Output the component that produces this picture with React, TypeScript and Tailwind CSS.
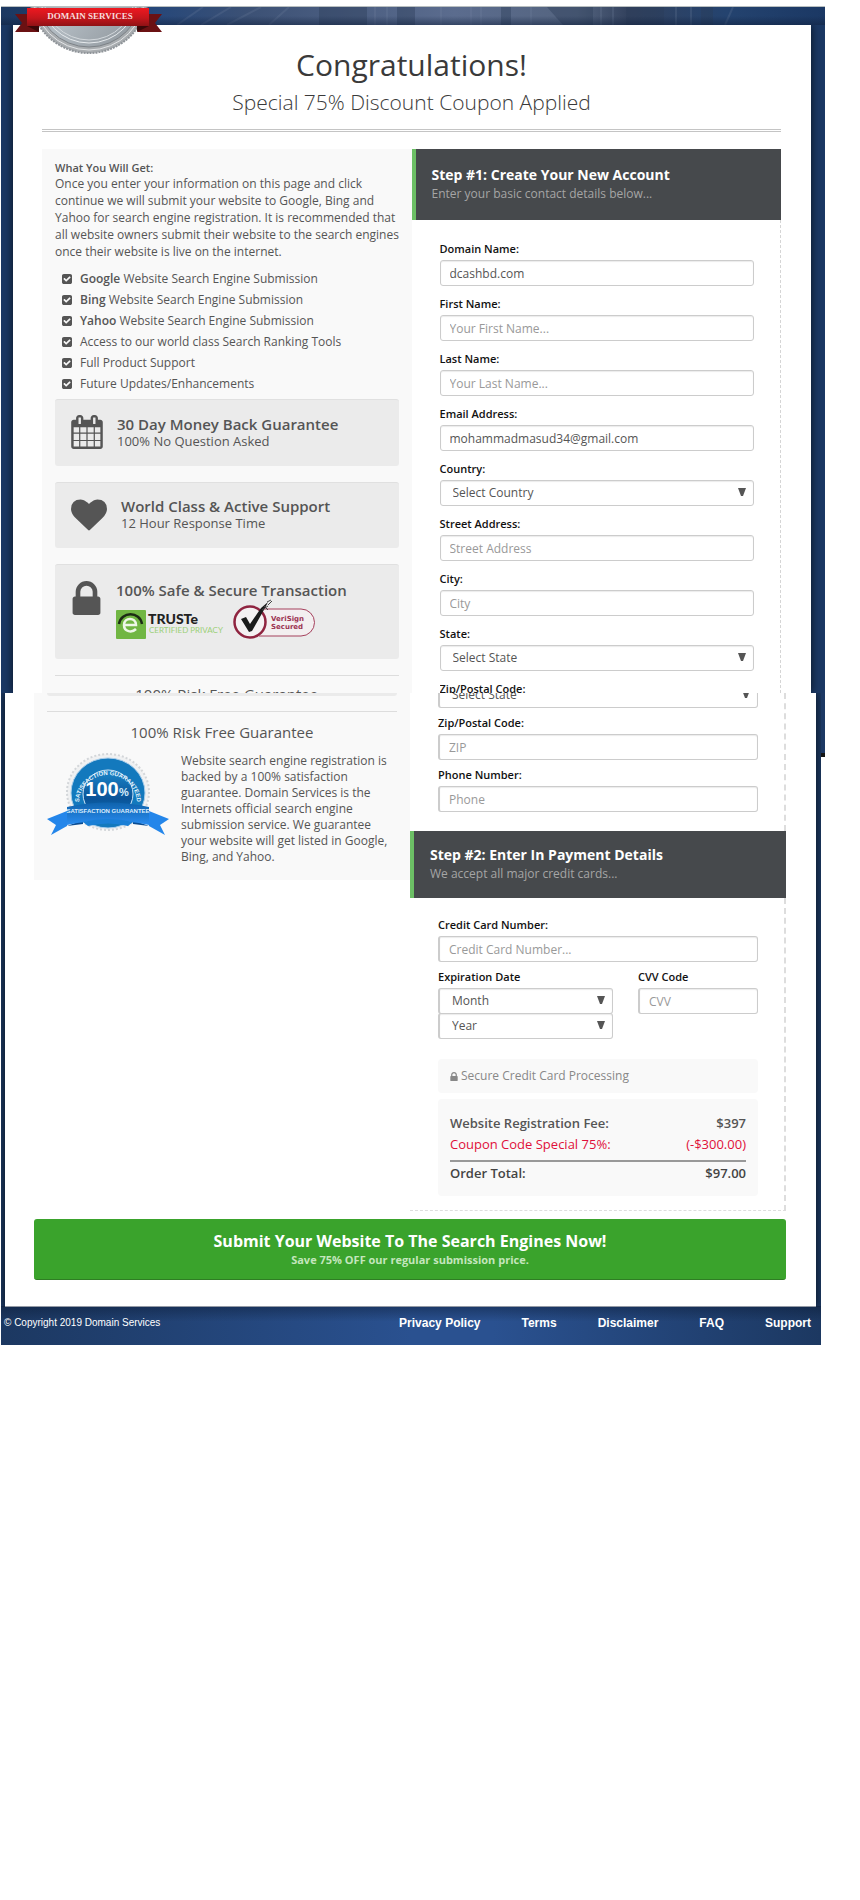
import type { ReactNode } from "react";

const CALENDAR =
  "M128 1664h288v-288h-288v288zm352 0h320v-288h-320v288zm-352-352h288v-320h-288v320zm352 0h320v-320h-320v320zm-352-384h288v-288h-288v288zm736 736h320v-288h-320v288zm-384-736h320v-288h-320v288zm768 736h288v-288h-288v288zm-384-352h320v-320h-320v320zm-352-864v-288q0-13-9.5-22.5t-22.5-9.5h-64q-13 0-22.5 9.5t-9.5 22.5v288q0 13 9.5 22.5t22.5 9.5h64q13 0 22.5-9.5t9.5-22.5zm736 864h288v-320h-288v320zm-384-384h320v-288h-320v288zm384 0h288v-288h-288v288zm32-480v-288q0-13-9.5-22.5t-22.5-9.5h-64q-13 0-22.5 9.5t-9.5 22.5v288q0 13 9.5 22.5t22.5 9.5h64q13 0 22.5-9.5t9.5-22.5zm384-64v1280q0 52-38 90t-90 38h-1408q-52 0-90-38t-38-90v-1280q0-52 38-90t90-38h128v-96q0-66 47-113t113-47h64q66 0 113 47t47 113v96h384v-96q0-66 47-113t113-47h64q66 0 113 47t47 113v96h128q52 0 90 38t38 90z";
const HEART =
  "M896 1664q-26 0-44-18l-624-602q-10-8-27.5-26t-55.5-65.5-68-97.5-53.5-121-23.5-138q0-220 127-344t351-124q62 0 126.5 21.5t120 58 95.5 68.5 76 68q36-36 76-68t95.5-68.5 120-58 126.5-21.5q224 0 351 124t127 344q0 221-229 450l-623 600q-18 18-44 18z";
const LOCK =
  "M640 768h512v-192q0-106-75-181t-181-75-181 75-75 181v192zm832 96v576q0 40-28 68t-68 28h-960q-40 0-68-28t-28-68v-576q0-40 28-68t68-28h32v-192q0-184 132-316t316-132 316 132 132 316v192h32q40 0 68 28t28 68z";
const CHECK =
  "M813 1299l614-614q19-19 19-45t-19-45l-102-102q-19-19-45-19t-45 19l-467 467-211-211q-19-19-45-19t-45 19l-102 102q-19 19-19 45t19 45l358 358q19 19 45 19t45-19zm851-883v960q0 119-84.5 203.5t-203.5 84.5h-960q-119 0-203.5-84.5t-84.5-203.5v-960q0-119 84.5-203.5t203.5-84.5h960q119 0 203.5 84.5t84.5 203.5z";

function Glyph({ d, box, className }: { d: string; box: string; className: string }) {
  return (
    <svg viewBox={box} className={`shrink-0 fill-current ${className}`} aria-hidden="true">
      <path d={d} />
    </svg>
  );
}

function SealLogo() {
  return (
    <svg viewBox="0 0 147 48" className="h-12 w-[147px]" role="img" aria-label="Domain Services">
      <defs>
        <linearGradient id="ribbon" x1="0" y1="0" x2="0" y2="1">
          <stop offset="0" stopColor="#ee1820" />
          <stop offset="0.55" stopColor="#c5161c" />
          <stop offset="1" stopColor="#8f1215" />
        </linearGradient>
        <linearGradient id="steel" x1="0" y1="0" x2="1" y2="1">
          <stop offset="0" stopColor="#8b9298" />
          <stop offset="0.5" stopColor="#b3bcc3" />
          <stop offset="1" stopColor="#8b9298" />
        </linearGradient>
      </defs>
      <circle cx="74" cy="-13" r="59" fill="#a9adb0" stroke="#8f9499" strokeWidth="2" strokeDasharray="2 1" />
      <circle cx="74" cy="-13" r="56" fill="none" stroke="#e3e5e7" strokeWidth="1" />
      <circle cx="74" cy="-13" r="53" fill="url(#steel)" stroke="#7d8287" strokeWidth="1" />
      <circle cx="74" cy="-13" r="49" fill="none" stroke="#e6eaed" strokeWidth="1" />
      <circle cx="74" cy="-13" r="46" fill="none" stroke="#d3d8dc" strokeWidth="1" />
      <path d="M0 7h24v18H0l7-9z" fill="#6b1113" />
      <path d="M147 7h-24v18h24l-7-9z" fill="#6b1113" />
      <path d="M12 19h12v6zM134 19h-12v6z" fill="#3c0809" />
      <rect x="12" y="1" width="122" height="18" fill="url(#ribbon)" />
      <text x="75" y="12" textAnchor="middle" fontFamily="'Liberation Serif', serif" fontSize="9" fontWeight="700" fill="#f8dada">
        DOMAIN SERVICES
      </text>
    </svg>
  );
}

function SkylineBand() {
  return (
    <svg viewBox="0 0 824 18" preserveAspectRatio="none" className="h-[18px] w-full" aria-hidden="true">
      <defs>
        <linearGradient id="sky" x1="0" x2="1" y1="0" y2="0">
          <stop offset="0" stopColor="#1c3861" />
          <stop offset="0.18" stopColor="#25477a" />
          <stop offset="0.3" stopColor="#3c5175" />
          <stop offset="0.55" stopColor="#5b6c8e" />
          <stop offset="0.7" stopColor="#54647f" />
          <stop offset="0.76" stopColor="#33425e" />
          <stop offset="0.88" stopColor="#24436f" />
          <stop offset="1" stopColor="#1b3864" />
        </linearGradient>
        <linearGradient id="skyShade" x1="0" x2="0" y1="0" y2="1">
          <stop offset="0.5" stopColor="#0f1f3c" stopOpacity="0" />
          <stop offset="1" stopColor="#0f1f3c" stopOpacity="0.5" />
        </linearGradient>
      </defs>
      <rect width="824" height="18" fill="url(#sky)" />
      <g fill="#2b3b58" opacity="0.4">
        <path d="M318 0h48v18h-48zM396 0h18v18h-18zM500 0h10v18h-10zM546 0h46v18h-30zM625 0h38v18h-38zM700 0h12v18h-12z" />
      </g>
      <g stroke="#7888a5" strokeWidth="2" opacity="0.2">
        <path d="M176 18l26-18M200 18l30-18M226 18l34-18M268 18l20-18M374 18V0M386 18V0M440 18V0M470 18V0M480 18V0M530 18V0M600 18V0M612 18V0M675 18V0M690 18V0M724 18l8-18" />
      </g>
      <rect width="824" height="18" fill="url(#skyShade)" />
    </svg>
  );
}

function TrusteLogo() {
  return (
    <svg viewBox="0 0 108 29" className="h-[29px] w-[108px]" role="img" aria-label="TRUSTe Certified Privacy">
      <rect width="30" height="29" rx="1" fill="#71b643" />
      <path d="M3 14C5 1 24 1 26 14" fill="none" stroke="#1c2a14" strokeWidth="2.500" />
      <path d="M9 15h11c0-8-12-8-12 0c0 7 8 8 12 4" fill="none" stroke="#eef7e8" strokeWidth="2.500" />
      <text x="32" y="14" fontFamily="Lato, sans-serif" fontSize="14" fontWeight="900" fill="#222">
        TRUSTe
      </text>
      <text x="33" y="23" fontFamily="Lato, sans-serif" fontSize="8" fill="#9bd077">
        CERTIFIED PRIVACY
      </text>
    </svg>
  );
}

function VerisignLogo() {
  return (
    <svg viewBox="0 0 82 40" className="h-10 w-[82px]" role="img" aria-label="VeriSign Secured">
      <path d="M28 10h40a13 13 0 0 1 0 27H26" fill="#f3eff0" stroke="#a5405c" strokeWidth="1" />
      <circle cx="17" cy="23" r="15.500" fill="#f4f1f2" stroke="#8f2440" strokeWidth="2.500" />
      <path d="M8 20l5-2 4 7L28 9l7-6-3 6L19 32l-3 1z" fill="#1b1b1b" />
      <path d="M29 11l6-4M31 7l4 4M34 3l4-2M35 6l4-4" stroke="#444" strokeWidth="1" />
      <text x="38" y="22" fontFamily="'DejaVu Sans', sans-serif" fontSize="7" fontWeight="700" fill="#9c3350">
        VeriSign
      </text>
      <text x="38" y="30" fontFamily="'DejaVu Sans', sans-serif" fontSize="7" fontWeight="700" fill="#9c3350">
        Secured
      </text>
    </svg>
  );
}

function GuaranteeBadge() {
  return (
    <svg viewBox="0 0 122 84" className="h-[84px] w-[122px] shrink-0" role="img" aria-label="100% satisfaction guarantee">
      <defs>
        <linearGradient id="badge" x1="0" y1="0" x2="0" y2="1">
          <stop offset="0" stopColor="#1b86c9" />
          <stop offset="0.6" stopColor="#0a5398" />
          <stop offset="1" stopColor="#0d76bd" />
        </linearGradient>
        <linearGradient id="band" x1="0" y1="0" x2="0" y2="1">
          <stop offset="0" stopColor="#0f63ad" />
          <stop offset="1" stopColor="#2a8cf0" />
        </linearGradient>
        <path id="badgeArc" d="M32 50A29 28 0 1 1 90 50" />
      </defs>
      <ellipse cx="61" cy="39" rx="41" ry="38" fill="#f0f1f2" stroke="#d3d6d9" strokeWidth="2" strokeDasharray="2 2" />
      <ellipse cx="61" cy="40" rx="37" ry="35" fill="#1379bd" stroke="#a8cdea" strokeWidth="1" />
      <ellipse cx="61" cy="41" rx="25" ry="24" fill="url(#badge)" stroke="#cfe5f6" strokeWidth="1" />
      <text fontFamily="'Liberation Sans', sans-serif" fontSize="6" fontWeight="700" fill="#e8f4fc">
        <textPath href="#badgeArc" startOffset="50%" textAnchor="middle">
          SATISFACTION GUARANTEED
        </textPath>
      </text>
      <text x="55" y="43" textAnchor="middle" fontFamily="'Liberation Sans', sans-serif" fontSize="20" fontWeight="700" fill="#fff">
        100
      </text>
      <text x="77" y="43" textAnchor="middle" fontFamily="'Liberation Sans', sans-serif" fontSize="11" fontWeight="700" fill="#d9ecfa">
        %
      </text>
      <path d="M0 66l20-8v15l-16 9 5-10zM122 66l-20-8v15l16 9-5-10z" fill="#2486ea" />
      <path d="M20 73l16-6v4zM102 73l-16-6v4z" fill="#0a4c92" />
      <path d="M20 54q41-9 82 0v18q-41-9-82 0z" fill="url(#band)" />
      <path d="M36 69q25-6 50 0l-5 4q-20-5-40 0z" fill="#1a7fd6" />
      <text x="61" y="60" textAnchor="middle" fontFamily="'Liberation Sans', sans-serif" fontSize="6" fontWeight="700" fill="#dceefe">
        SATISFACTION GUARANTEE
      </text>
    </svg>
  );
}

const control =
  "block h-[26px] w-full rounded-[3px] border border-[#ccc] bg-white text-[12px] text-[#555] outline-none placeholder:text-[#999] shadow-[inset_0_1px_1px_rgba(0,0,0,0.08)]";

function Label({ htmlFor, children }: { htmlFor: string; children: ReactNode }) {
  return (
    <label htmlFor={htmlFor} className="block h-[19px] whitespace-nowrap text-[11px] font-semibold leading-[18px] text-[#111]">
      {children}
    </label>
  );
}

function TextBox({ id, value, placeholder, type = "text" }: { id: string; value?: string; placeholder?: string; type?: string }) {
  return <input id={id} type={type} defaultValue={value} placeholder={placeholder} className={`${control} px-[9px]`} />;
}

function DropDown({ id, option, label }: { id: string; option: string; label?: string }) {
  return (
    <div className="relative h-[26px] w-full shrink-0">
      <select id={id} aria-label={label} className={`${control} appearance-none pl-3 pr-6`}>
        <option>{option}</option>
      </select>
      <svg viewBox="0 0 8 8" className="pointer-events-none absolute right-2 top-2 size-2 fill-[#555]" aria-hidden="true">
        <path d="M0 0h8L5 8H3z" />
      </svg>
    </div>
  );
}

function Field({ id, label, children }: { id: string; label: string; children: ReactNode }) {
  return (
    <div className="flex flex-col gap-px">
      <Label htmlFor={id}>{label}</Label>
      {children}
    </div>
  );
}

function StepHeader({ title, note, className }: { title: string; note: string; className: string }) {
  return (
    <header className={`border-l-4 border-[#6cbf65] bg-[#46494c] pl-4 ${className}`}>
      <h2 className="text-[14px] font-bold leading-5 text-white">{title}</h2>
      <p className="text-[12px] leading-[18px] text-[#a5a5a5]">{note}</p>
    </header>
  );
}

function Perk({ icon, title, children, className }: { icon: ReactNode; title: string; children: ReactNode; className: string }) {
  return (
    <div className={`flex items-start gap-[14px] rounded-[3px] border-t border-[#e0e0e0] bg-[#ebebeb] px-4 ${className}`}>
      {icon}
      <div>
        <h3 className="text-[15px] font-semibold leading-[18px] text-[#555]">{title}</h3>
        {children}
      </div>
    </div>
  );
}

const features = [
  { lead: "Google", text: " Website Search Engine Submission" },
  { lead: "Bing", text: " Website Search Engine Submission" },
  { lead: "Yahoo", text: " Website Search Engine Submission" },
  { lead: "", text: "Access to our world class Search Ranking Tools" },
  { lead: "", text: "Full Product Support" },
  { lead: "", text: "Future Updates/Enhancements" },
];

const links = ["Privacy Policy", "Terms", "Disclaimer", "FAQ", "Support"];

function AccountSection() {
  return (
    <section className="relative ml-px mr-[35px] border-t border-[#b9bfc0] bg-[#1b3864]">
      <SkylineBand />
      <div className="absolute left-[14px] top-0">
        <SealLogo />
      </div>
      <div className="overflow-hidden pl-3 pr-[14px]">
        <div className="bg-white pl-[29px] pr-[30px] shadow-[0_0_9px_rgba(0,0,0,0.7)]">
          <div className="border-b-[3px] border-double border-[#c4c4c4] pb-3 pt-[18px] text-center text-[#3a3a3a]">
            <h1 className="text-[30px] font-medium leading-[44px]">Congratulations!</h1>
            <p className="text-[21px] font-light leading-[30px]">Special 75% Discount Coupon Applied</p>
          </div>
          <div className="mt-[17px] grid grid-cols-2">
            <div className="bg-[#f9f9f9] px-[13px] pt-[11px] text-[12px] text-[#555]">
              <h2 className="text-[11px] font-semibold leading-[15px]">What You Will Get:</h2>
              <p className="leading-[17px]">
                Once you enter your information on this page and click
                <br />
                continue we will submit your website to Google, Bing and
                <br />
                Yahoo for search engine registration. It is recommended that
                <br />
                <span className="whitespace-nowrap">all website owners submit their website to the search engines</span>
                <br />
                once their website is live on the internet.
              </p>
              <ul className="mb-[5px] mt-2 pl-[7px]">
                {features.map((f) => (
                  <li key={f.lead + f.text} className="flex h-[21px] items-center gap-2">
                    <Glyph d={CHECK} box="128 128 1536 1536" className="size-[10px]" />
                    <span className="leading-[18px]">
                      {f.lead && <strong className="font-semibold">{f.lead}</strong>}
                      {f.text}
                    </span>
                  </li>
                ))}
              </ul>
              <div className="flex flex-col gap-4">
                <Perk
                  title="30 Day Money Back Guarantee"
                  className="h-[67px] pt-[15px]"
                  icon={<Glyph d={CALENDAR} box="0 0 1664 1792" className="h-[34px] w-8" />}
                >
                  <p className="text-[13px] leading-4">100% No Question Asked</p>
                </Perk>
                <Perk
                  title="World Class & Active Support"
                  className="h-[66px] pt-[14px]"
                  icon={<Glyph d={HEART} box="0 0 1792 1792" className="size-9" />}
                >
                  <p className="text-[13px] leading-4">12 Hour Response Time</p>
                </Perk>
                <Perk
                  title="100% Safe & Secure Transaction"
                  className="h-[95px] pt-[16px]"
                  icon={<Glyph d={LOCK} box="320 128 1152 1408" className="h-[34px] w-[31px]" />}
                >
                  <div className="flex items-end gap-[9px]">
                    <TrusteLogo />
                    <VerisignLogo />
                  </div>
                </Perk>
              </div>
              <div className="mt-4 border-t border-[#ddd] pt-2">
                <h3 className="h-[9px] overflow-hidden text-center text-[15px] font-medium leading-5">100% Risk Free Guarantee</h3>
              </div>
            </div>
            <div className="flex flex-col">
              <StepHeader title="Step #1: Create Your New Account" note="Enter your basic contact details below..." className="h-[71px] pt-4" />
              <form className="flex grow flex-col gap-[9px] border-r border-dashed border-[#d5d5d5] pl-7 pr-[26px] pt-5">
                <Field id="domain" label="Domain Name:">
                  <TextBox id="domain" value="dcashbd.com" />
                </Field>
                <Field id="first" label="First Name:">
                  <TextBox id="first" placeholder="Your First Name..." />
                </Field>
                <Field id="last" label="Last Name:">
                  <TextBox id="last" placeholder="Your Last Name..." />
                </Field>
                <Field id="email" label="Email Address:">
                  <TextBox id="email" type="email" value="mohammadmasud34@gmail.com" />
                </Field>
                <Field id="country" label="Country:">
                  <DropDown id="country" option="Select Country" />
                </Field>
                <Field id="street" label="Street Address:">
                  <TextBox id="street" placeholder="Street Address" />
                </Field>
                <Field id="city" label="City:">
                  <TextBox id="city" placeholder="City" />
                </Field>
                <Field id="state" label="State:">
                  <DropDown id="state" option="Select State" />
                </Field>
                <div className="h-[13px] overflow-hidden">
                  <Label htmlFor="zip">Zip/Postal Code:</Label>
                </div>
              </form>
            </div>
          </div>
        </div>
      </div>
    </section>
  );
}

function PaymentSection() {
  return (
    <div className="ml-px mr-[35px] flex items-start">
      <section className="min-w-0 grow bg-[linear-gradient(90deg,#1c3861,#2a5190_50%,#2a5190_60%,#1c3861)]">
        <div className="overflow-hidden pl-1 pr-[5px]">
          <div className="bg-white pb-[27px] pl-[29px] pr-[30px] shadow-[0_0_9px_rgba(0,0,0,0.7)]">
            <div className="grid grid-cols-2 items-start">
              <div className="bg-[#f9f9f9] px-[13px] pb-[15px] text-[#555]">
                <div className="h-[3px] rounded-b-[3px] bg-[#ebebeb]" />
                <div className="mt-[15px] border-t border-[#ddd] pt-2 text-center">
                  <h3 className="text-[15px] font-medium leading-[24px]">100% Risk Free Guarantee</h3>
                </div>
                <div className="mt-[9px] flex items-start gap-3">
                  <GuaranteeBadge />
                  <p className="text-[12px] leading-4">
                    Website search engine registration is backed by a 100% satisfaction guarantee. Domain Services is the Internets official search engine
                    submission service. We guarantee your website will get listed in Google, Bing, and Yahoo.
                  </p>
                </div>
              </div>
              <div className="[&_input]:border-l-2 [&_select]:border-l-2">
                <form className="flex flex-col gap-[6px] border-r-2 border-dashed border-[#ddd] pb-[19px] pl-7 pr-[26px]">
                  <div className="flex h-[15px] flex-col justify-end overflow-hidden">
                    <DropDown id="state-repeat" option="Select State" label="State" />
                  </div>
                  <Field id="zip" label="Zip/Postal Code:">
                    <TextBox id="zip" placeholder="ZIP" />
                  </Field>
                  <Field id="phone" label="Phone Number:">
                    <TextBox id="phone" type="tel" placeholder="Phone" />
                  </Field>
                </form>
                <StepHeader title="Step #2: Enter In Payment Details" note="We accept all major credit cards..." className="h-[67px] pt-[14px]" />
                <form className="flex flex-col border-b border-r-2 border-dashed border-[#ddd] pb-[14px] pl-7 pr-[26px] pt-[18px]">
                  <Field id="card" label="Credit Card Number:">
                    <TextBox id="card" placeholder="Credit Card Number..." />
                  </Field>
                  <div className="mt-[6px] flex items-start gap-[25px]">
                    <div className="min-w-0 flex-[175]">
                      <Field id="month" label="Expiration Date">
                        <DropDown id="month" option="Month" />
                      </Field>
                      <div className="-mt-px">
                        <DropDown id="year" option="Year" label="Expiration year" />
                      </div>
                    </div>
                    <div className="min-w-0 flex-[120]">
                      <Field id="cvv" label="CVV Code">
                        <TextBox id="cvv" placeholder="CVV" />
                      </Field>
                    </div>
                  </div>
                  <p className="mt-5 flex h-[34px] items-center gap-[3px] rounded bg-[#f9f9f9] px-3 text-[12px] text-[#888]">
                    <Glyph d={LOCK} box="320 128 1152 1408" className="h-[9px] w-2" />
                    Secure Credit Card Processing
                  </p>
                  <div className="mt-[6px] rounded bg-[#f9f9f9] px-3 pb-[11px] pt-[13px] text-[13px] text-[#555]">
                    <table className="w-full border-collapse">
                      <tbody>
                        <tr className="h-[23px] font-semibold">
                          <th scope="row" className="p-0 text-left font-semibold">Website Registration Fee:</th>
                          <td className="p-0 text-right">$397</td>
                        </tr>
                        <tr className="h-[26px] border-b-2 border-[#999] align-top text-[#e0103a]">
                          <th scope="row" className="p-0 text-left font-normal">Coupon Code Special 75%:</th>
                          <td className="p-0 text-right">(-$300.00)</td>
                        </tr>
                        <tr className="h-6 font-semibold text-[#444]">
                          <th scope="row" className="p-0 text-left font-semibold">Order Total:</th>
                          <td className="p-0 text-right">$97.00</td>
                        </tr>
                      </tbody>
                    </table>
                  </div>
                </form>
              </div>
            </div>
            <button type="submit" className="mt-2 block h-[61px] w-full rounded-[3px] border-b border-[#2f7d24] bg-[#3aa32c] text-center">
              <span className="block text-[16px] font-bold leading-[22px] text-white">Submit Your Website To The Search Engines Now!</span>
              <span className="block text-[11px] font-bold leading-4 text-[#c4e6bd]">Save 75% OFF our regular submission price.</span>
            </button>
          </div>
        </div>
        <footer className="relative -mt-px flex items-center justify-between bg-[linear-gradient(180deg,rgba(10,25,50,0.45),transparent_40%)] pb-[13px] pl-[3px] pr-[10px] pt-2 font-['Liberation_Sans',Arial,sans-serif] text-[10px] leading-[18px] text-white">
          <span>© Copyright 2019 Domain Services</span>
          <nav className="flex gap-[41px] text-[12px] font-bold">
            {links.map((l) => (
              <a key={l} href="#">
                {l}
              </a>
            ))}
          </nav>
        </footer>
      </section>
      <div className="h-16 w-1 shrink-0 border-b-4 border-[#151515] bg-[#1c3864]" />
    </div>
  );
}

export default function App() {
  return (
    <main className="min-h-screen bg-white pb-[555px] pt-[6px] font-['Open_Sans','Noto_Sans',sans-serif]">
      <AccountSection />
      <PaymentSection />
    </main>
  );
}
